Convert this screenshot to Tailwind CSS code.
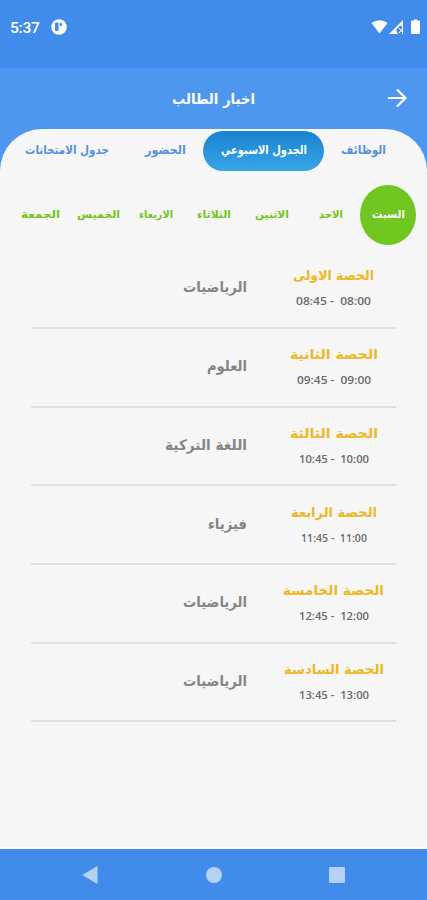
<!DOCTYPE html>
<html lang="ar"><head><meta charset="utf-8"><title>اخبار الطالب</title>
<script src="https://cdn.jsdelivr.net/npm/@tailwindcss/browser@4"></script></head>
<body class="bg-[#f6f6f6] font-['DejaVu_Sans',sans-serif]">
<div class="w-[427px] h-[900px] flex flex-col bg-[#4d98ee] overflow-hidden">
<div class="h-[68px] shrink-0 bg-[#418cea] flex items-start justify-between pl-[10px] pr-[7px] pt-[18px] text-white">
<div class="flex items-center gap-[12px] h-[20px]"><span class="font-[Roboto,sans-serif] font-medium text-[15.500px] leading-[20px] w-[29px] tracking-[-0.2px]">5:37</span>
<svg class="w-4 h-4 -mt-[2px]" viewBox="0 0 16 16"><circle cx="8" cy="8" r="7.8" fill="#fff"/><path d="M4 4.200Q4 3.400 5 3.400H7.600V11Q7.600 12 6.600 12H4ZM8.800 3.800H9.600A1.600 1.600 0 0 1 9.600 7H8.800Z" fill="#418cea"/></svg></div>
<svg class="w-[49px] h-[18px]" viewBox="0 0 49 18" fill="#fff"><path d="M0.500 5Q8.500-.5 16.500 5L8.500 15.500Z"/><path fill-rule="evenodd" d="M18 16L32 2V7L28 8.500L25 12L27 16Z"/><path d="M28 10l4 5M32 10l-4 5M31.500 3V16" fill="none" stroke="#fff" stroke-width="1"/><path d="M41 2.500h2V1.500h3v1h2q1 0 1 1V15q0 1-1 1h-7q-1 0-1-1V3.500q0-1 1-1z"/></svg>
</div>
<header class="h-[61px] shrink-0 grid grid-cols-[1fr_auto_1fr] items-center pl-[20px] pr-[20px]" dir="rtl">
<svg class="w-[20px] h-[20px] -mt-[2px]" viewBox="0 0 20 20" fill="none" stroke="#fff" stroke-width="2.200"><path d="M1 10H18M10 1.500L18.500 10L10 18.500"/></svg>
<h1 class="text-white font-bold text-[14.500px] flex" data-text="اخبار الطالب" data-width="83"></h1></header>
<main class="h-[720px] shrink-0 bg-[#f6f6f6] rounded-t-[42px] border-b-2 border-white pt-[2px]" dir="rtl">
<nav class="h-[40px] flex items-center text-[12px] font-bold text-[#5792df]">
<div class="w-[126px] pr-[41px] -mt-1" data-text="الوظائف" data-width="45"></div>
<div class="w-[121px] -mr-[23px] h-[40px] rounded-[20px] bg-linear-to-b from-[#1982d0] to-[#38a6e5] text-white flex items-center justify-center pb-1" data-text="الجدول الاسبوعي" data-width="86"></div>
<div class="pr-[17px] -mt-1" data-text="الحضور" data-width="41"></div>
<div class="pr-[36px] -mt-1" data-text="جدول الامتحانات" data-width="84"></div>
</nav>
<nav class="h-[60px] mt-[14px] pr-[11px] flex items-center text-[11px] font-bold text-[#74c520]">
<div class="w-[56px] h-[60px] rounded-[50%] bg-[#70c71f] text-white flex items-center justify-center pb-[5px]" data-text="السبت" data-width="33"></div>
<div class="mr-[17px] -mt-[5px]" data-text="الاحد" data-width="24"></div>
<div class="mr-[30px] -mt-[5px]" data-text="الاثنين" data-width="34"></div>
<div class="mr-[24px] -mt-[5px]" data-text="الثلاثاء" data-width="34"></div>
<div class="mr-[24px] -mt-[5px]" data-text="الاربعاء" data-width="34"></div>
<div class="mr-[19px] -mt-[5px]" data-text="الخميس" data-width="43"></div>
<div class="mr-[17px] -mt-[5px]" data-text="الجمعة" data-width="39"></div>
</nav>
<section id="lessons" class="pt-[5.200px] px-[31px]"></section>
</main>
<footer class="flex-1 bg-[#418cea] flex items-center justify-between pl-[82px] pr-[82px]">
<svg class="w-4 h-[18px]" viewBox="0 0 16 18"><path d="M0 9L15.500 0V18Z" fill="#b5d1f6"/></svg>
<span class="w-4 h-4 rounded-full bg-[#b5d1f6]"></span>
<span class="w-4 h-4 rounded-[1px] bg-[#b5d1f6]"></span>
</footer>
</div>
<script>
const lessons=[
['الحصة الاولى',81,'08:45 -\u00a0 08:00',75,'الرياضيات',64],
['الحصة الثانية',88,'09:45 -\u00a0 09:00',74,'العلوم',40],
['الحصة الثالثة',88,'10:45 -\u00a0 10:00',70,'اللغة التركية',82],
['الحصة الرابعة',86,'11:45 -\u00a0 11:00',66,'فيزياء',39],
['الحصة الخامسة',101,'12:45 -\u00a0 12:00',70,'الرياضيات',64],
['الحصة السادسة',100,'13:45 -\u00a0 13:00',70,'الرياضيات',64]];
document.getElementById('lessons').innerHTML=lessons.map(([n,nw,t,tw,s,sw])=>`
<article class="h-[78.700px] flex border-b-2 border-[#e0e0e0] font-bold">
<div class="w-[125px] flex flex-col items-center pt-[15.300px] gap-[5px]">
<div class="text-[13.500px] text-[#edb924]" data-text="${n}" data-width="${nw}"></div>
<div dir="ltr" class="font-['Open_Sans',sans-serif] font-semibold text-[11.500px] text-[#6a6a6a]" data-text="${t}" data-width="${tw}"></div></div>
<div class="pr-[24px] pt-[27.300px] text-[14.500px] text-[#858585]" data-text="${s}" data-width="${sw}"></div>
</article>`).join('');
document.querySelectorAll('[data-text]').forEach(e=>{const w=e.dataset.width;
e.innerHTML=`<svg class="block shrink-0 h-5 overflow-visible" style="width:${w}px" fill="currentColor"><text x="${w/2}" y="15" text-anchor="middle" textLength="${w}" lengthAdjust="spacingAndGlyphs">${e.dataset.text}</text></svg>`;});
</script>
</body></html>
